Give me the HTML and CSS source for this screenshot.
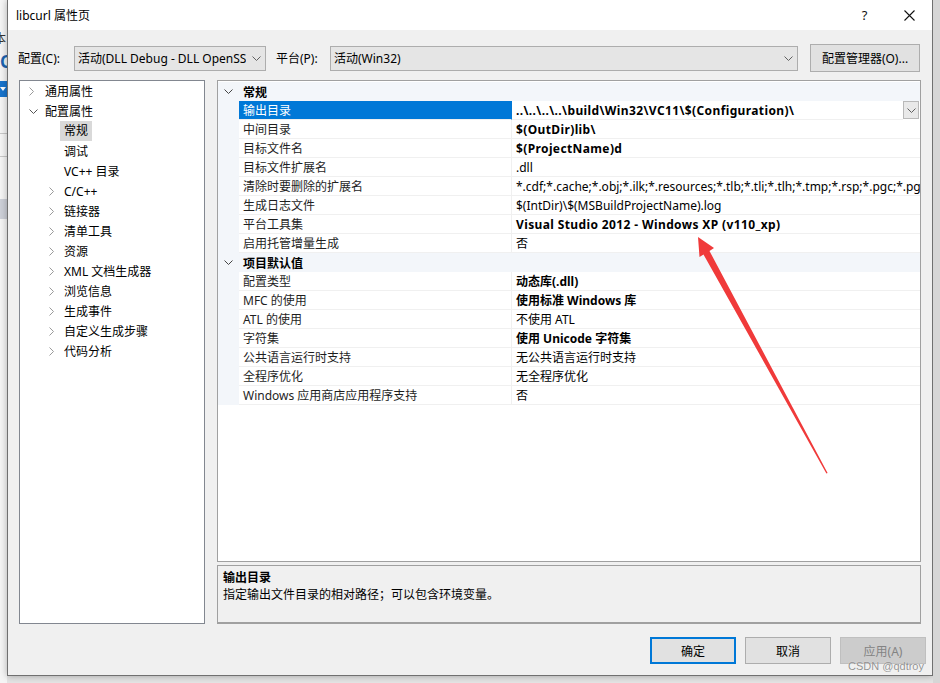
FILE: index.html
```html
<!DOCTYPE html>
<html lang="zh-CN">
<head>
  <meta charset="UTF-8">
  <title>libcurl 属性页</title>
  <link rel="stylesheet" href="styles.css">
</head>
<body>
<div class="desk">

  <!-- bits of the IDE window behind the dialog -->
  <div class="behind">
    <div class="behind-char">本</div>
    <div class="behind-c">C</div>
    <div class="behind-bar"><span class="tri"></span></div>
    <div class="behind-line"></div>
    <div class="behind-line second"></div>
    <div class="behind-block"></div>
  </div>

  <div class="dialog">
    <div class="titlebar">
      <span class="title">libcurl 属性页</span>
      <span class="tb-btn">?</span>
      <span class="tb-btn">
        <svg width="11" height="11" viewBox="0 0 11 11"><path d="M0.5 0.5 L10.5 10.5 M10.5 0.5 L0.5 10.5" stroke="#111" stroke-width="1.1" fill="none"/></svg>
      </span>
    </div>

    <div class="config-row">
      <label class="lbl lbl-config">配置(C):</label>
      <div class="combo combo-config">
        <span class="combo-text">活动(DLL Debug - DLL OpenSSL)</span>
        <svg class="combo-arrow" width="9" height="5" viewBox="0 0 9 5"><path d="M0.5 0.5 L4.5 4.5 L8.5 0.5" stroke="#606060" fill="none"/></svg>
      </div>
      <label class="lbl lbl-platform">平台(P):</label>
      <div class="combo combo-platform">
        <span class="combo-text">活动(Win32)</span>
        <svg class="combo-arrow" width="9" height="5" viewBox="0 0 9 5"><path d="M0.5 0.5 L4.5 4.5 L8.5 0.5" stroke="#606060" fill="none"/></svg>
      </div>
      <button class="btn btn-manager">配置管理器(O)...</button>
    </div>

    <div class="main">
      <div class="tree">
        <div class="trow lvl0"><span class="tw"><svg width="5" height="9" viewBox="0 0 5 9"><path d="M0.5 0.5 L4.5 4.5 L0.5 8.5" stroke="#9a9a9a" fill="none"/></svg></span>通用属性</div>
        <div class="trow lvl0"><span class="tw"><svg width="9" height="5" viewBox="0 0 9 5"><path d="M0.5 0.5 L4.5 4.5 L8.5 0.5" stroke="#555" fill="none"/></svg></span>配置属性</div>
        <div class="trow lvl1"><span class="tw"></span><span class="tsel">常规</span></div>
        <div class="trow lvl1"><span class="tw"></span>调试</div>
        <div class="trow lvl1"><span class="tw"></span>VC++ 目录</div>
        <div class="trow lvl1"><span class="tw"><svg width="5" height="9" viewBox="0 0 5 9"><path d="M0.5 0.5 L4.5 4.5 L0.5 8.5" stroke="#9a9a9a" fill="none"/></svg></span>C/C++</div>
        <div class="trow lvl1"><span class="tw"><svg width="5" height="9" viewBox="0 0 5 9"><path d="M0.5 0.5 L4.5 4.5 L0.5 8.5" stroke="#9a9a9a" fill="none"/></svg></span>链接器</div>
        <div class="trow lvl1"><span class="tw"><svg width="5" height="9" viewBox="0 0 5 9"><path d="M0.5 0.5 L4.5 4.5 L0.5 8.5" stroke="#9a9a9a" fill="none"/></svg></span>清单工具</div>
        <div class="trow lvl1"><span class="tw"><svg width="5" height="9" viewBox="0 0 5 9"><path d="M0.5 0.5 L4.5 4.5 L0.5 8.5" stroke="#9a9a9a" fill="none"/></svg></span>资源</div>
        <div class="trow lvl1"><span class="tw"><svg width="5" height="9" viewBox="0 0 5 9"><path d="M0.5 0.5 L4.5 4.5 L0.5 8.5" stroke="#9a9a9a" fill="none"/></svg></span>XML 文档生成器</div>
        <div class="trow lvl1"><span class="tw"><svg width="5" height="9" viewBox="0 0 5 9"><path d="M0.5 0.5 L4.5 4.5 L0.5 8.5" stroke="#9a9a9a" fill="none"/></svg></span>浏览信息</div>
        <div class="trow lvl1"><span class="tw"><svg width="5" height="9" viewBox="0 0 5 9"><path d="M0.5 0.5 L4.5 4.5 L0.5 8.5" stroke="#9a9a9a" fill="none"/></svg></span>生成事件</div>
        <div class="trow lvl1"><span class="tw"><svg width="5" height="9" viewBox="0 0 5 9"><path d="M0.5 0.5 L4.5 4.5 L0.5 8.5" stroke="#9a9a9a" fill="none"/></svg></span>自定义生成步骤</div>
        <div class="trow lvl1"><span class="tw"><svg width="5" height="9" viewBox="0 0 5 9"><path d="M0.5 0.5 L4.5 4.5 L0.5 8.5" stroke="#9a9a9a" fill="none"/></svg></span>代码分析</div>
      </div>

      <div class="right">
        <div class="grid">
          <div class="prow cat">
            <span class="gut"><svg width="9" height="5" viewBox="0 0 9 5"><path d="M0.5 0.5 L4.5 4.5 L8.5 0.5" stroke="#444" fill="none"/></svg></span>
            <span class="cat-name">常规</span>
          </div>
          <div class="prow">
            <span class="gut"></span>
            <span class="pname sel">输出目录</span>
            <span class="pval b lat">..\..\..\..\build\Win32\VC11\$(Configuration)\</span>
            <span class="drop"><svg width="9" height="5" viewBox="0 0 9 5"><path d="M0.5 0.5 L4.5 4.5 L8.5 0.5" stroke="#606060" fill="none"/></svg></span>
          </div>
          <div class="prow"><span class="gut"></span><span class="pname">中间目录</span><span class="pval b lat">$(OutDir)lib\</span></div>
          <div class="prow"><span class="gut"></span><span class="pname">目标文件名</span><span class="pval b lat">$(ProjectName)d</span></div>
          <div class="prow"><span class="gut"></span><span class="pname">目标文件扩展名</span><span class="pval">.dll</span></div>
          <div class="prow"><span class="gut"></span><span class="pname">清除时要删除的扩展名</span><span class="pval">*.cdf;*.cache;*.obj;*.ilk;*.resources;*.tlb;*.tli;*.tlh;*.tmp;*.rsp;*.pgc;*.pgd;*.meta;*.tlog;*.manifest;*.res;*.pch;*.exp;*.idb;*.rep;*.xdc;*.pdb;*_manifest.rc;*.bsc;*.sbr;*.xml;*.metagen;*.bi</span></div>
          <div class="prow"><span class="gut"></span><span class="pname">生成日志文件</span><span class="pval">$(IntDir)\$(MSBuildProjectName).log</span></div>
          <div class="prow"><span class="gut"></span><span class="pname">平台工具集</span><span class="pval b lat">Visual Studio 2012 - Windows XP (v110_xp)</span></div>
          <div class="prow"><span class="gut"></span><span class="pname">启用托管增量生成</span><span class="pval">否</span></div>
          <div class="prow cat">
            <span class="gut"><svg width="9" height="5" viewBox="0 0 9 5"><path d="M0.5 0.5 L4.5 4.5 L8.5 0.5" stroke="#444" fill="none"/></svg></span>
            <span class="cat-name">项目默认值</span>
          </div>
          <div class="prow"><span class="gut"></span><span class="pname">配置类型</span><span class="pval b">动态库(.dll)</span></div>
          <div class="prow"><span class="gut"></span><span class="pname">MFC 的使用</span><span class="pval b">使用标准 Windows 库</span></div>
          <div class="prow"><span class="gut"></span><span class="pname">ATL 的使用</span><span class="pval">不使用 ATL</span></div>
          <div class="prow"><span class="gut"></span><span class="pname">字符集</span><span class="pval b">使用 Unicode 字符集</span></div>
          <div class="prow"><span class="gut"></span><span class="pname">公共语言运行时支持</span><span class="pval">无公共语言运行时支持</span></div>
          <div class="prow"><span class="gut"></span><span class="pname">全程序优化</span><span class="pval">无全程序优化</span></div>
          <div class="prow"><span class="gut"></span><span class="pname">Windows 应用商店应用程序支持</span><span class="pval">否</span></div>
        </div>

        <div class="desc">
          <div class="desc-title">输出目录</div>
          <div class="desc-text">指定输出文件目录的相对路径；可以包含环境变量。</div>
        </div>
      </div>
    </div>

    <div class="buttons">
      <button class="btn btn-ok">确定</button>
      <button class="btn">取消</button>
      <button class="btn btn-disabled">应用(A)</button>
    </div>
  </div>

  <div class="behind-right"></div>

  <!-- red annotation arrow drawn over the screenshot -->
  <svg class="arrow" width="940" height="683" viewBox="0 0 940 683">
    <polygon points="698,237 714,248 709.5,251 827.6,473 826.4,473.4 703.5,254.5 699.5,257" fill="#f03a3a"/>
  </svg>
  <div class="watermark">CSDN @qdtroy</div>
</div>
</body>
</html>
```

FILE: styles.css
```css
body {
  margin: 0;
  background: #e9e9e9;
  font-family: "Segoe UI", "Noto Sans", "Noto Sans CJK SC", sans-serif;
  font-size: 12px;
  color: #000;
}

.desk {
  position: relative;
  width: 940px;
  height: 683px;
  overflow: hidden;
  display: flex;
  align-items: flex-start;
  background: #e4e4e4;
}

/* IDE behind the dialog */
.behind {
  width: 7px;
  height: 683px;
  flex: none;
  overflow: hidden;
  background: #f5f5f5;
}

.behind-char {
  margin: 29px 0 0 -6px;
  height: 18px;
  line-height: 18px;
  font-family: "Noto Sans CJK SC", sans-serif;
  color: #333;
}

.behind-c {
  margin: 5px 0 0 0;
  height: 20px;
  line-height: 20px;
  font-size: 17px;
  font-weight: bold;
  color: #1c64b0;
}

.behind-bar {
  margin-top: 9px;
  height: 16px;
  background: #1874cd;
  display: flex;
  align-items: center;
}

.behind-bar .tri {
  width: 0;
  height: 0;
  border-left: 3px solid transparent;
  border-right: 3px solid transparent;
  border-top: 4px solid #fff;
}

.behind-line {
  margin-top: 36px;
  height: 1px;
  background: #c8c8c8;
}

.behind-line.second {
  margin-top: 22px;
}

.behind-block {
  margin-top: 42px;
  height: 20px;
  background: #cdd0d8;
}

.behind-right {
  width: 7px;
  height: 683px;
  flex: none;
  background: #d6d6d6;
}

/* dialog */
.dialog {
  width: 924px;
  height: 675px;
  flex: none;
  border: 1px solid #707070;
  border-top: none;
  background: #f0f0f0;
  box-shadow: 0 0 7px rgba(0, 0, 0, 0.3);
  display: flex;
  flex-direction: column;
}

.titlebar {
  height: 30px;
  background: #fff;
  display: flex;
  align-items: center;
  flex: none;
}

.title {
  flex: 1;
  padding-left: 8px;
  color: #000;
}

.tb-btn {
  width: 45px;
  height: 30px;
  display: flex;
  align-items: center;
  justify-content: center;
  font-size: 13px;
  color: #111;
}

.config-row {
  margin-top: 14px;
  height: 28px;
  padding-left: 10px;
  display: flex;
  align-items: center;
  flex: none;
}

.lbl {
  flex: none;
  color: #000;
}

.lbl-config {
  width: 56px;
}

.lbl-platform {
  width: 54px;
  margin-left: 10px;
}

.combo {
  height: 25px;
  box-sizing: border-box;
  border: 1px solid #adadad;
  background: #e5e5e5;
  display: flex;
  align-items: center;
  padding-left: 3px;
  flex: none;
  overflow: hidden;
}

.combo-config {
  width: 192px;
}

.combo-platform {
  width: 468px;
}

.combo-text {
  flex: 1;
  white-space: nowrap;
  overflow: hidden;
}

.combo-arrow {
  flex: none;
  margin: 0 4px 0 6px;
}

.btn {
  width: 86px;
  height: 27px;
  box-sizing: border-box;
  border: 1px solid #adadad;
  background: #e1e1e1;
  font-family: inherit;
  font-size: 12px;
  color: #000;
  padding: 0;
}

.btn-manager {
  width: 110px;
  height: 28px;
  margin-left: 12px;
}

.main {
  margin-top: 8px;
  padding-left: 11px;
  height: 544px;
  display: flex;
  flex: none;
}

/* left tree */
.tree {
  width: 186px;
  height: 544px;
  box-sizing: border-box;
  border: 1px solid #828790;
  background: #fff;
  flex: none;
}

.trow {
  height: 20px;
  display: flex;
  align-items: center;
  white-space: nowrap;
}

.trow.lvl0 {
  padding-left: 9px;
}

.trow.lvl1 {
  padding-left: 29px;
}

.tw {
  width: 16px;
  display: flex;
  align-items: center;
  flex: none;
}

.lvl1 .tw {
  width: 15px;
}

.tsel {
  background: #d9d9d9;
  margin-left: -4px;
  padding: 0 4px;
  line-height: 20px;
}

/* property grid */
.right {
  margin-left: 12px;
  width: 704px;
  display: flex;
  flex-direction: column;
}

.grid {
  height: 482px;
  box-sizing: border-box;
  border: 1px solid #a0a0a0;
  padding-top: 1px;
  background: #fff;
  overflow: hidden;
}

.prow {
  height: 19px;
  display: flex;
  white-space: nowrap;
}

.prow.cat {
  background: #f3f6fa;
  align-items: center;
}

.gut {
  width: 21px;
  flex: none;
  background: #f3f6fa;
  display: flex;
  align-items: center;
  justify-content: center;
}

.cat-name {
  padding-left: 4px;
  font-weight: bold;
}

.pname,
.pval {
  box-sizing: border-box;
  height: 19px;
  line-height: 16px;
  padding-top: 2px;
  border-bottom: 1px solid #f0f0f0;
  padding-left: 4px;
  overflow: hidden;
}

.pname {
  width: 273px;
  flex: none;
  border-right: 1px solid #f0f0f0;
  color: #1e1e1e;
}

.pname.sel {
  background: #0078d7;
  color: #fff;
  border-right-color: #0078d7;
}

.pval {
  flex: 1;
  min-width: 0;
}

.pval.b {
  font-weight: bold;
}

.pval.lat {
  letter-spacing: 0.38px;
}

.drop {
  width: 16px;
  height: 18px;
  box-sizing: border-box;
  border: 1px solid #b9b9b9;
  background: #e9e9e9;
  display: flex;
  align-items: center;
  justify-content: center;
  flex: none;
  margin-right: 1px;
}

.desc {
  margin-top: 3px;
  height: 59px;
  box-sizing: border-box;
  border: 1px solid #a0a0a0;
  border-bottom: 2px solid #a0a0a0;
  padding: 3px 5px;
  background: #f0f0f0;
}

.desc-title {
  font-weight: bold;
  line-height: 17px;
}

.desc-text {
  line-height: 17px;
}

.buttons {
  margin-top: 13px;
  padding-right: 6px;
  display: flex;
  justify-content: flex-end;
  flex: none;
}

.buttons .btn {
  margin-left: 9px;
}

.btn-ok {
  border: 2px solid #0078d7;
}

.btn-disabled {
  background: #cccccc;
  border-color: #bfbfbf;
  color: #838383;
}

.arrow {
  position: absolute;
  left: 0;
  top: 0;
  pointer-events: none;
}

.watermark {
  position: absolute;
  left: 848px;
  top: 660px;
  font-family: "Liberation Sans", sans-serif;
  font-size: 11px;
  color: rgba(110, 110, 110, 0.75);
  text-shadow: 0 0 1px rgba(255, 255, 255, 0.9);
}
```
